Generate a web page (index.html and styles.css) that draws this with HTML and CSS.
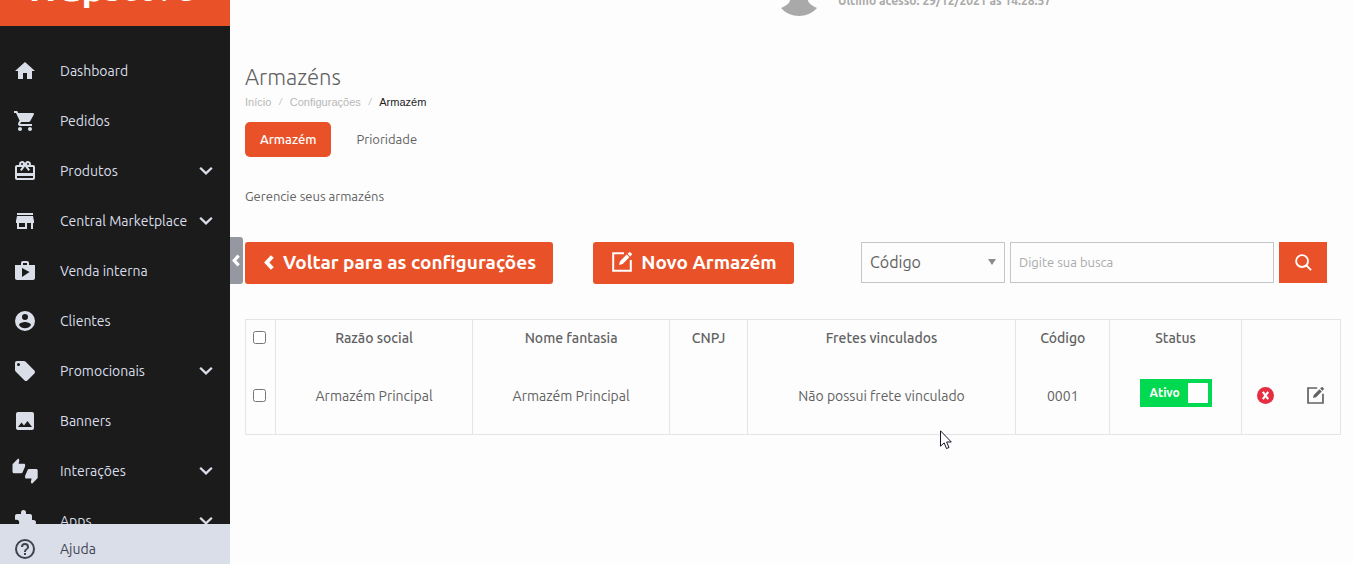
FILE: index.html
```html
<!DOCTYPE html>
<html lang="pt-BR">

<head>
    <meta charset="UTF-8">
    <meta name="viewport" content="width=device-width, initial-scale=1.0">
    <title>Armazéns</title>
    <link rel="stylesheet" href="styles.css">
</head>

<body>
    <svg class="sprite" aria-hidden="true">
        <symbol id="chevron" viewBox="0 0 12 8"><path d="M1 1.200 6 6l5-4.800" fill="none" stroke="currentColor" stroke-width="2"/></symbol>
        <symbol id="angle-left" viewBox="0 0 10 16"><path d="M8.300 2 2.800 8l5.500 6" fill="none" stroke="currentColor" stroke-width="4"/></symbol>
        <symbol id="edit" viewBox="0 0 20 20"><path d="M12 1.200H1.200v17.600h17.600V8" fill="none" stroke="currentColor" stroke-width="2"/><path d="m7 13 1-3.700L14.700 2.600l2.700 2.700L10.700 12zM15.500 1.800 17 .4q.8-.6 1.500 0l1.100 1.100q.6.700 0 1.500l-1.400 1.500z" fill="currentColor"/></symbol>
    </svg>

    <aside class="sidebar">
        <div class="logo"><span><b>Wap</b>store</span></div>
        <nav class="menu">
            <a href="#"><svg viewBox="0 0 24 24"><path d="M10 20v-6h4v6h5v-8h3L12 3 2 12h3v8z"/></svg>Dashboard</a>
            <a href="#"><svg viewBox="0 0 24 24"><path d="M7 18c-1.100 0-2 .9-2 2s.9 2 2 2 2-.9 2-2-.9-2-2-2zM1 2v2h2l3.600 7.600-1.350 2.450C4.520 15.370 5.480 17 7 17h12v-2H7.420c-.14 0-.25-.11-.25-.25L8.100 13h7.450c.75 0 1.410-.41 1.750-1.030L20.880 5.500C21.250 4.820 20.760 4 20 4H5.210L4.270 2zm16 16c-1.100 0-2 .9-2 2s.9 2 2 2 2-.9 2-2-.9-2-2-2z"/></svg>Pedidos</a>
            <a href="#"><svg viewBox="0 0 24 24"><path d="M20 6h-2.180c.11-.31.18-.65.180-1a3 3 0 0 0-5.500-1.650l-.5.670-.5-.680A3 3 0 0 0 6 5c0 .35.070.69.180 1H4c-1.110 0-1.990.89-1.990 2L2 19c0 1.110.89 2 2 2h16c1.110 0 2-.89 2-2V8c0-1.110-.89-2-2-2zm-5-2a1 1 0 1 1 0 2 1 1 0 0 1 0-2zM9 4a1 1 0 1 1 0 2 1 1 0 0 1 0-2zm11 15H4v-2h16zm0-5H4V8h5.080L7 10.830 8.620 12 12 7.400l3.380 4.600L17 10.830 14.920 8H20z"/></svg>Produtos<svg class="arrow"><use href="#chevron"/></svg></a>
            <a href="#"><svg viewBox="0 0 24 24"><path d="M20 4H4v2h16zm1 10v-2l-1-5H4l-1 5v2h1v6h10v-6h4v6h2v-6zm-9 4H6v-4h6z"/></svg>Central Marketplace<svg class="arrow"><use href="#chevron"/></svg></a>
            <a href="#"><svg viewBox="0 0 24 24"><path d="M16 6V4c0-1.110-.89-2-2-2h-4c-1.110 0-2 .89-2 2v2H2v13c0 1.110.89 2 2 2h16c1.110 0 2-.89 2-2V6zm-6-2h4v2h-4zM9 18V9l7.500 4z"/></svg>Venda interna</a>
            <a href="#"><svg viewBox="0 0 24 24"><path d="M12 2a10 10 0 1 0 0 20 10 10 0 0 0 0-20zm0 3a3 3 0 1 1 0 6 3 3 0 0 1 0-6zm0 14.200a7.200 7.200 0 0 1-6-3.220c.030-1.990 4-3.080 6-3.080 1.990 0 5.970 1.090 6 3.080a7.200 7.200 0 0 1-6 3.220z"/></svg>Clientes</a>
            <a href="#"><svg viewBox="0 0 24 24"><path d="m21.410 11.580-9-9A2 2 0 0 0 11 2H4c-1.100 0-2 .9-2 2v7c0 .55.220 1.050.590 1.420l9 9a2 2 0 0 0 2.820 0l7-7a2 2 0 0 0 0-2.840zM5.500 7a1.500 1.500 0 1 1 0-3 1.500 1.500 0 0 1 0 3z"/></svg>Promocionais<svg class="arrow"><use href="#chevron"/></svg></a>
            <a href="#"><svg viewBox="0 0 24 24"><path d="M21 19V5c0-1.100-.9-2-2-2H5c-1.100 0-2 .9-2 2v14c0 1.100.9 2 2 2h14c1.100 0 2-.9 2-2zM8.500 13.500l2.500 3.010L14.500 12l4.500 6H5z"/></svg>Banners</a>
            <a href="#"><svg viewBox="0 0 24 24"><path d="M12 6c0-.55-.45-1-1-1H5.820l.66-3.180.020-.23c0-.31-.13-.59-.33-.8L5.380 0 .44 4.940C.17 5.210 0 5.590 0 6v6.500c0 .83.670 1.500 1.500 1.500h6.750c.62 0 1.150-.38 1.380-.91l2.260-5.290c.070-.17.110-.36.110-.55zm10.500 4h-6.750c-.62 0-1.150.38-1.380.91l-2.260 5.290c-.070.170-.11.360-.11.550V18c0 .55.450 1 1 1h5.180l-.66 3.180-.020.240c0 .31.130.59.330.8l.79.780 4.940-4.940c.27-.27.440-.65.440-1.060v-6.500c0-.83-.67-1.500-1.500-1.500z" transform="translate(-.5 -.5) scale(1.050)"/></svg>Interações<svg class="arrow"><use href="#chevron"/></svg></a>
            <a href="#"><svg viewBox="0 0 24 24"><path d="M20.500 11H19V7c0-1.100-.9-2-2-2h-4V3.500a2.500 2.500 0 0 0-5 0V5H4c-1.100 0-1.990.9-1.990 2v3.800H3.500a2.700 2.700 0 0 1 0 5.400H2V20c0 1.100.9 2 2 2h3.800v-1.500a2.700 2.700 0 0 1 5.400 0V22H17c1.100 0 2-.9 2-2v-4h1.500a2.500 2.500 0 0 0 0-5z"/></svg>Apps<svg class="arrow"><use href="#chevron"/></svg></a>
        </nav>
        <a class="help" href="#"><svg viewBox="0 0 24 24"><path d="M11 18h2v-2h-2zm1-16a10 10 0 1 0 0 20 10 10 0 0 0 0-20zm0 18a8 8 0 1 1 0-16 8 8 0 0 1 0 16zm0-14a4 4 0 0 0-4 4h2a2 2 0 1 1 4 0c0 2-3 1.750-3 5h2c0-2.250 3-2.500 3-5a4 4 0 0 0-4-4z"/></svg>Ajuda</a>
        <button class="collapse" aria-label="Recolher menu"><svg><use href="#angle-left"/></svg></button>
    </aside>

    <main class="content">
        <header class="user">
            <svg class="avatar" viewBox="0 0 36 36"><path d="M18 0C12 0 9 4 9 9v11c0 3-3 5-9 8 9 10.500 27 10.500 36 0-6-3-9-5-9-8V9c0-5-3-9-9-9z"/></svg>
            <span>Último acesso: 29/12/2021 às 14:28:57</span>
        </header>

        <h1>Armazéns</h1>
        <nav class="breadcrumb">
            <a href="#">Início</a><i>/</i><a href="#">Configurações</a><i>/</i><span>Armazém</span>
        </nav>
        <nav class="tabs">
            <a class="active" href="#">Armazém</a>
            <a href="#">Prioridade</a>
        </nav>
        <p class="intro">Gerencie seus armazéns</p>

        <div class="toolbar">
            <button class="btn"><svg class="back-icon"><use href="#angle-left"/></svg>Voltar para as configurações</button>
            <button class="btn btn-new"><svg class="edit-icon"><use href="#edit"/></svg>Novo Armazém</button>
            <form class="search">
                <div class="select-box">
                    <select aria-label="Buscar por">
                        <option>Código</option>
                    </select>
                </div>
                <input type="text" placeholder="Digite sua busca" aria-label="Busca">
                <button type="button" aria-label="Buscar"><svg viewBox="0 0 18 18"><circle cx="7.500" cy="7.500" r="6.300"/><path d="m12 12 5 5"/></svg></button>
            </form>
        </div>

        <table>
            <colgroup>
                <col class="col-check">
                <col class="col-name">
                <col class="col-name">
                <col class="col-cnpj">
                <col class="col-freight">
                <col class="col-code">
                <col class="col-status">
                <col>
            </colgroup>
            <thead>
                <tr>
                    <th><input type="checkbox" aria-label="Selecionar todos"></th>
                    <th>Razão social</th>
                    <th>Nome fantasia</th>
                    <th>CNPJ</th>
                    <th>Fretes vinculados</th>
                    <th>Código</th>
                    <th>Status</th>
                    <th></th>
                </tr>
            </thead>
            <tbody>
                <tr>
                    <td><input type="checkbox" aria-label="Selecionar Armazém Principal"></td>
                    <td>Armazém Principal</td>
                    <td>Armazém Principal</td>
                    <td></td>
                    <td>Não possui frete vinculado</td>
                    <td>0001</td>
                    <td><label class="switch"><input type="checkbox" checked>Ativo<span class="knob"></span></label></td>
                    <td>
                        <div class="actions">
                            <button class="remove" aria-label="Excluir"><svg viewBox="0 0 16 16"><circle cx="8" cy="8" r="8"/><path d="m5.500 4.500 5 7m0-7-5 7"/></svg></button>
                            <button aria-label="Editar"><svg><use href="#edit"/></svg></button>
                        </div>
                    </td>
                </tr>
            </tbody>
        </table>
    </main>

    <svg class="cursor" viewBox="0 0 12 20"><path d="M.5.800v15.400l3.700-3.300 2.300 5.600 2.500-1-2.400-5.500h4.700z"/></svg>
</body>

</html>
```

FILE: styles.css
```css
* {
    box-sizing: border-box;
}

body {
    display: flex;
    height: 100vh;
    margin: 0;
    overflow: hidden;
    background-color: #fdfdfd;
    color: #626262;
    font-family: Ubuntu, "Noto Sans", sans-serif;
    font-size: 13px;
}

a {
    color: inherit;
    text-decoration: none;
}

button,
input,
select {
    font-family: inherit;
}

button {
    padding: 0;
    border: none;
    background: none;
    cursor: pointer;
}

.sprite {
    display: none;
}

/* Menu lateral */
.sidebar {
    position: relative;
    display: flex;
    flex-direction: column;
    flex: none;
    width: 230px;
    background-color: #1b1b1b;
    color: #dadee9;
    font-size: 14px;
}

.logo {
    display: flex;
    flex: none;
    align-items: flex-end;
    justify-content: center;
    height: 26px;
    padding: 0 10px 16px 0;
    background-color: #e95228;
    color: #fff;
    font-size: 39px;
    line-height: 46px;
}

.menu {
    flex: 1;
    min-height: 0;
    padding-top: 20px;
    overflow: hidden;
}

.menu a,
.help {
    display: flex;
    align-items: center;
    height: 50px;
    padding: 0 17px 0 13px;
}

.menu svg,
.help svg {
    width: 24px;
    height: 24px;
    margin-right: 23px;
    fill: currentColor;
    overflow: visible;
}

.menu .arrow {
    width: 14px;
    height: 10px;
    margin: 0 0 0 auto;
}

.help {
    flex: none;
    height: 40px;
    padding-top: 10px;
    background-color: #dadee9;
    color: #3f4250;
}

.collapse {
    position: absolute;
    top: 237px;
    left: 100%;
    width: 13px;
    height: 47px;
    border-radius: 0 3px 3px 0;
    background-color: #9698a1;
    color: #fff;
}

.collapse svg {
    display: block;
    width: 8px;
    height: 13px;
    margin-left: 2px;
}

/* Conteúdo */
.content {
    flex: 1;
    min-width: 0;
    padding: 0 12px 0 15px;
}

.user {
    display: flex;
    align-items: flex-end;
    justify-content: center;
    gap: 21px;
    height: 16px;
    margin-left: 246px;
    color: #aaa;
    font-size: 12px;
    font-weight: bold;
}

.user span {
    line-height: 30px;
}

.avatar {
    width: 36px;
    height: 36px;
    fill: #a9a9a9;
}

h1 {
    margin: 45px 0 0;
    font-size: 22px;
    font-weight: 300;
    line-height: 32px;
}

.breadcrumb {
    display: flex;
    gap: 8px;
    color: #b8b8b8;
    font: 11px/18px "Liberation Sans", Arial, sans-serif;
}

.breadcrumb i {
    font-size: 9px;
}

.breadcrumb span {
    color: #222;
}

.tabs {
    display: flex;
    gap: 10px;
    margin-top: 11px;
    line-height: 35px;
}

.tabs a {
    padding: 0 15px;
    border-radius: 5px;
}

.tabs .active {
    background-color: #e95228;
    color: #fff;
    font-weight: 500;
}

.intro {
    margin: 29px 0 0;
    line-height: 20px;
}

.toolbar {
    display: flex;
    margin: 36px 14px 35px 0;
}

.btn {
    display: flex;
    align-items: center;
    height: 42px;
    padding: 0 17px 2px 19px;
    border-radius: 3px;
    background-color: #e95228;
    color: #fff;
    font-size: 19px;
    font-weight: 600;
}

.btn-new {
    margin-left: 40px;
}

.back-icon {
    width: 10px;
    height: 17px;
    margin-right: 9px;
}

.edit-icon {
    width: 20px;
    height: 20px;
    margin-right: 9px;
}

.search {
    display: flex;
    gap: 5px;
    height: 41px;
    margin-left: auto;
}

.select-box {
    position: relative;
    width: 144px;
}

.select-box::after {
    content: "";
    position: absolute;
    top: 17px;
    right: 9px;
    border: 4px solid transparent;
    border-top: 6px solid #8b8b8b;
    border-bottom: none;
}

.search select,
.search input {
    height: 100%;
    padding: 0 8px 2px;
    border: 1px solid #c6c6c6;
    border-radius: 0;
    background-color: #fdfdfd;
    color: #626262;
}

.search select {
    width: 100%;
    appearance: none;
    font-size: 16px;
}

.search input {
    width: 264px;
    font-size: 13px;
}

.search input::placeholder {
    color: #aaa;
}

.search button {
    width: 48px;
    background-color: #e95228;
}

.search svg {
    display: block;
    width: 17px;
    height: 17px;
    margin: 0 auto;
    fill: none;
    stroke: #fff;
    stroke-width: 2;
}

/* Tabela */
table {
    width: 100%;
    table-layout: fixed;
    border-collapse: collapse;
    border: 1px solid #e5e5e5;
    font-size: 14px;
    text-align: center;
}

th,
td {
    height: 38px;
    padding: 0 0 2px;
    border-left: 1px solid #e5e5e5;
}

th {
    font-weight: 500;
}

td {
    height: 77px;
    padding: 0;
}

table input {
    display: block;
    margin: 0 auto 0 7px;
}

.col-check {
    width: 30px;
}

.col-name {
    width: 18%;
}

.col-cnpj {
    width: 7.1%;
}

.col-freight {
    width: 24.5%;
}

.col-code {
    width: 8.6%;
}

.col-status {
    width: 12%;
}

.switch {
    display: inline-flex;
    align-items: center;
    justify-content: space-between;
    width: 72px;
    height: 28px;
    margin-bottom: 6px;
    padding: 0 4px 0 10px;
    background-color: #00d950;
    color: #fff;
    font-size: 12px;
    font-weight: 600;
    cursor: pointer;
}

.switch input {
    display: none;
}

.knob {
    width: 20px;
    height: 20px;
    background-color: #fdfdfd;
}

.actions {
    display: flex;
    align-items: center;
    justify-content: space-between;
    padding: 0 16px 0 15px;
}

.actions button {
    color: #626262;
}

.actions svg {
    display: block;
    width: 17px;
    height: 17px;
}

.remove circle {
    fill: #e62e42;
}

.remove path {
    stroke: #fff;
    stroke-width: 2;
}

.cursor {
    position: absolute;
    top: 430px;
    left: 940px;
    width: 12px;
    height: 20px;
    fill: #fff;
    stroke: #15152b;
}
```
